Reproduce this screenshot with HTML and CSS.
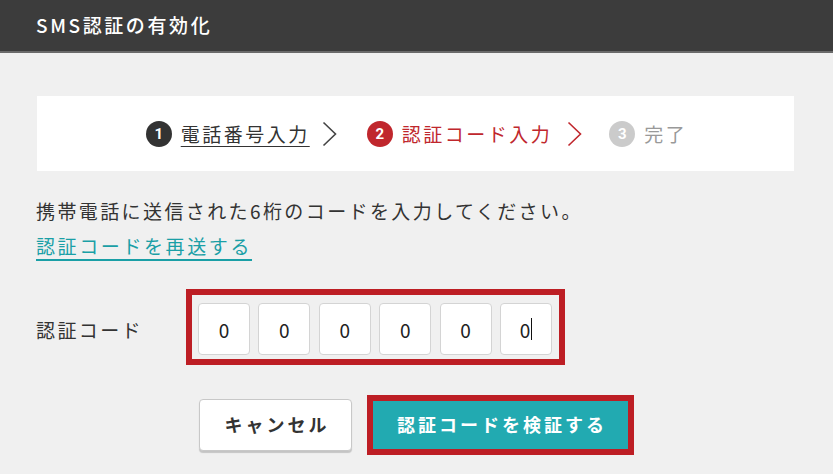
FILE: index.html
```html
<!DOCTYPE html>
<html lang="ja">
<head>
<meta charset="utf-8">
<title>SMS認証の有効化</title>
<link rel="stylesheet" href="styles.css">
</head>
<body>
<header class="header">
  <h1 class="title">SMS認証の有効化</h1>
</header>
<main class="main">
  <div class="steps">
    <div class="step step-done">
      <span class="num">1</span>
      <a class="step-label" href="#">電話番号入力</a>
    </div>
    <svg class="chev" width="15" height="26" viewBox="0 0 15 26"><polyline points="1.5,1.5 13.5,13 1.5,24.5" fill="none" stroke="#444" stroke-width="1.6"/></svg>
    <div class="step step-current">
      <span class="num">2</span>
      <span class="step-label">認証コード入力</span>
    </div>
    <svg class="chev" width="15" height="26" viewBox="0 0 15 26"><polyline points="1.5,1.5 13.5,13 1.5,24.5" fill="none" stroke="#c0272d" stroke-width="1.6"/></svg>
    <div class="step step-todo">
      <span class="num">3</span>
      <span class="step-label">完了</span>
    </div>
  </div>

  <p class="desc">携帯電話に送信された6桁のコードを入力してください。</p>
  <a class="resend" href="#">認証コードを再送する</a>

  <div class="code-row">
    <div class="code-label">認証コード</div>
    <div class="code-box">
      <div class="digit">0</div>
      <div class="digit">0</div>
      <div class="digit">0</div>
      <div class="digit">0</div>
      <div class="digit">0</div>
      <div class="digit digit-active">0<span class="caret"></span></div>
    </div>
  </div>

  <div class="actions">
    <button class="btn btn-cancel" type="button">キャンセル</button>
    <div class="verify-wrap">
      <button class="btn btn-verify" type="button">認証コードを検証する</button>
    </div>
  </div>
</main>
</body>
</html>
```

FILE: styles.css
```css
* { box-sizing: border-box; }

html, body {
  margin: 0;
  padding: 0;
  background: #f0f0f0;
  font-family: "Noto Sans CJK JP", "Noto Sans", sans-serif;
  color: #333;
}

.header {
  height: 53px;
  background: #3c3c3c;
  border-bottom: 2px solid #6a6a6a;
  display: flex;
  align-items: center;
  padding-left: 36px;
}

.title {
  margin: 0;
  font-size: 19px;
  font-weight: 500;
  color: #fff;
  letter-spacing: 2.6px;
  line-height: 1;
  padding-bottom: 3px;
}

.main {
  padding: 43px 39px 0 37px;
}

.steps {
  height: 75px;
  background: #fff;
  display: flex;
  align-items: center;
  justify-content: center;
  padding-left: 2px;
}

.step {
  display: flex;
  align-items: center;
}

.num {
  width: 26px;
  height: 26px;
  border-radius: 50%;
  display: flex;
  align-items: center;
  justify-content: center;
  color: #fff;
  font-family: "Roboto", "Liberation Sans", sans-serif;
  font-weight: 700;
  font-size: 15px;
  margin-right: 9px;
}

.step-label {
  font-size: 19px;
  letter-spacing: 2.5px;
  line-height: 26px;
}

.step-done .num { background: #333; }
.step-done .step-label {
  color: #333;
  text-decoration: underline;
  text-underline-offset: 4px;
  text-decoration-thickness: 1px;
}

.step-current .num { background: #c0272d; }
.step-current .step-label { color: #c0272d; }

.step-todo .num { background: #cbcbcb; }
.step-todo .step-label { color: #999; }

.chev {
  display: block;
  margin: 0 30px 0 12px;
}

.step-current + .chev {
  margin: 0 27px 0 15px;
}

.desc {
  margin: 27px 0 0 -1px;
  font-size: 19px;
  letter-spacing: 2.4px;
  line-height: 26px;
}

.resend {
  display: inline-block;
  margin: 9px 0 0 -1px;
  font-size: 19px;
  letter-spacing: 2.6px;
  line-height: 26px;
  color: #1a9fa6;
  text-decoration: underline;
  text-underline-offset: 5px;
  text-decoration-thickness: 2px;
}

.code-row {
  display: flex;
  align-items: center;
  margin-top: 30px;
}

.code-label {
  width: 150px;
  margin-left: -1px;
  font-size: 19px;
  letter-spacing: 2.4px;
  padding-top: 4px;
}

.code-box {
  display: flex;
  gap: 8.4px;
  border: 6px solid #bd1e24;
  padding: 8px 7px 4px 6px;
}

.digit {
  width: 52px;
  height: 52px;
  background: #fff;
  border: 1px solid #d4d4d4;
  border-radius: 4px;
  display: flex;
  align-items: center;
  justify-content: center;
  font-family: "Noto Sans CJK JP", sans-serif;
  font-size: 19px;
  color: #222;
}

.caret {
  display: inline-block;
  width: 1px;
  height: 22px;
  background: #111;
  margin-left: 1px;
}

.actions {
  display: flex;
  align-items: center;
  margin-top: 30px;
  margin-left: 162px;
  gap: 15px;
}

.btn {
  font-family: "Noto Sans CJK JP", sans-serif;
  font-weight: 700;
  font-size: 18px;
  letter-spacing: 3px;
  cursor: pointer;
}

.btn-cancel {
  width: 153px;
  height: 52px;
  background: #fff;
  color: #333;
  border: 1px solid #c8c8c8;
  border-radius: 4px;
  box-shadow: 0 2px 1px rgba(0, 0, 0, 0.18);
  padding: 0 0 2px 3px;
}

.verify-wrap {
  border: 6px solid #bd1e24;
}

.btn-verify {
  display: block;
  width: 255px;
  height: 48px;
  background: #22aab1;
  color: #fff;
  border: none;
  padding: 0 0 2px 3px;
}
```
